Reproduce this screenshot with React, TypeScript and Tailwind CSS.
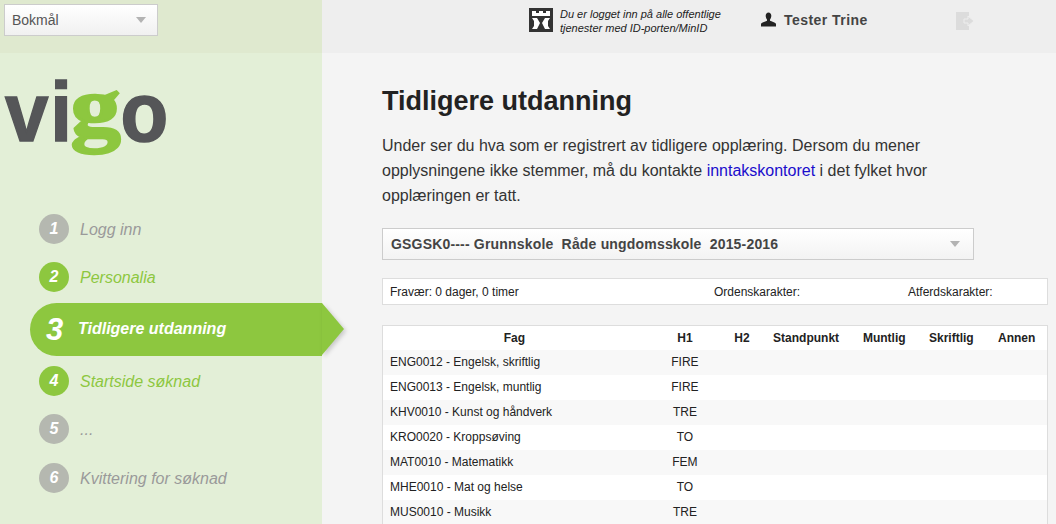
const sans = "font-['Liberation_Sans',Arial,sans-serif]";

const steps = [
  { n: "1", label: "Logg inn", kind: "gray" },
  { n: "2", label: "Personalia", kind: "green" },
  { n: "3", label: "Tidligere utdanning", kind: "active" },
  { n: "4", label: "Startside søknad", kind: "green" },
  { n: "5", label: "...", kind: "gray" },
  { n: "6", label: "Kvittering for søknad", kind: "last" },
];

const rows = [
  ["ENG0012 - Engelsk, skriftlig", "FIRE"],
  ["ENG0013 - Engelsk, muntlig", "FIRE"],
  ["KHV0010 - Kunst og håndverk", "TRE"],
  ["KRO0020 - Kroppsøving", "TO"],
  ["MAT0010 - Matematikk", "FEM"],
  ["MHE0010 - Mat og helse", "TO"],
  ["MUS0010 - Musikk", "TRE"],
];

function Caret() {
  return <span className="h-0 w-0 border-x-[5px] border-t-[6px] border-x-transparent border-t-[#b3b3b3]" />;
}

function Step({ n, label, kind }: { n: string; label: string; kind: string }) {
  if (kind === "active") {
    return (
      <div className="relative mt-[2px] mb-[1px] ml-[30px] flex h-[53px] w-[292px] items-center rounded-l-[27px] bg-[#8dc73f] pl-[16px]">
        <span className="w-[32px] text-[31px] leading-none font-bold text-white italic">{n}</span>
        <span className="pb-[2px] text-[16px] font-bold text-white italic">{label}</span>
        <span className="absolute top-0 left-[292px] h-0 w-0 border-y-[26.5px] border-l-[22px] border-y-transparent border-l-[#8dc73f] drop-shadow-[2px_2px_2px_rgba(0,0,0,0.18)]" />
      </div>
    );
  }
  const green = kind === "green";
  return (
    <div className={`ml-[39px] flex h-[48px] items-center ${kind === "last" ? "mt-[1px]" : ""}`}>
      <span className={`flex h-[30px] w-[30px] items-center justify-center rounded-full text-[16px] font-bold text-white italic ${green ? "bg-[#8dc73f]" : "bg-[#b5b8b0]"}`}>{n}</span>
      <span className={`ml-[11px] pt-[2px] text-[16px] italic ${green ? "text-[#8dc73f]" : "text-[#9a9a9a]"}`}>{label}</span>
    </div>
  );
}

export default function App() {
  return (
    <div className={`flex h-[524px] w-[1056px] overflow-hidden bg-[#f4f4f4] text-[#222] ${sans}`}>
      <aside className="flex w-[322px] shrink-0 flex-col bg-[#e3efd7]">
        <div className="h-[53px] bg-[#dfe9cf] pt-[4px] pl-[4px]">
          <div className="flex h-[32px] w-[154px] items-center justify-between border border-[#ccc] bg-gradient-to-b from-white to-[#f0f0f0] pr-[11px] pl-[7px] text-[14px] text-[#555]">
            Bokmål
            <Caret />
          </div>
        </div>
        <div className="h-[152px] pl-[5px]">
          <div className="mt-[13px] flex h-[90px] origin-left scale-x-[0.93] items-baseline text-[84px] leading-[90px] font-bold text-[#555658] [-webkit-text-stroke:1.5px_#555658]">
            <span className="tracking-[2px]">vi</span>
            <span className="ml-[1px] inline-block -translate-y-[4px] scale-x-[1.2] scale-y-[0.95] font-['Liberation_Serif',serif] text-[90px] text-[#8dc73f] [-webkit-text-stroke:2.5px_#8dc73f]">g</span>
            <span className="ml-[4px]">o</span>
          </div>
        </div>
        {steps.map((s) => (
          <Step key={s.n} {...s} />
        ))}
      </aside>
      <main className="min-w-0 flex-1">
        <header className="flex h-[53px] items-start bg-[#eeeeee]">
          <svg className="mt-[8px] ml-[207px]" width="24" height="24" viewBox="0 0 24 24">
            <rect width="24" height="24" fill="#333" />
            <path d="M3 3h4v2h3V3h4v2h3V3h4v5H3z" fill="#fff" />
            <path d="M3 10h5l3 5-3 6H3l2-3v-5z" fill="#fff" />
            <path d="M21 10h-5l-3 5 3 6h5l-2-3v-5z" fill="#fff" />
          </svg>
          <p className="mt-[7px] ml-[7px] w-[190px] text-[11px] leading-[14px] text-[#222] italic">
            Du er logget inn på alle offentlige tjenester med ID-porten/MinID
          </p>
          <svg className="mt-[12px] ml-[11px]" width="15" height="15" viewBox="0 0 16 15">
            <path d="M5 3.500C5 1.500 6.300 0 8 0s3 1.500 3 3.500c0 1.600-.6 3-1.400 3.900v1.400c1.600.9 5.400 1.600 6.400 3.200V15H0v-3c1-1.600 4.800-2.300 6.400-3.200V7.400C5.600 6.500 5 5.100 5 3.500z" fill="#222" />
          </svg>
          <span className="mt-[12px] ml-[8px] w-[83px] text-[14px] leading-[16px] font-bold tracking-[0.45px] whitespace-nowrap text-[#444]">Tester Trine</span>
          <svg className="mt-[12px] ml-[89px]" width="19" height="18" viewBox="0 0 19 18">
            <rect width="13" height="18" fill="#dcdcdc" />
            <path d="M8 7h4V4l6 5-6 5v-3H8z" fill="#dcdcdc" stroke="#eeeeee" strokeWidth="1" />
          </svg>
        </header>
        <div className="pr-[8px] pl-[60px]">
          <h1 className="mt-[32px] text-[27px] leading-[32px] font-bold text-[#222]">Tidligere utdanning</h1>
          <p className="mt-[16px] w-[570px] text-[16px] leading-[25px] text-[#333]">
            Under ser du hva som er registrert av tidligere opplæring. Dersom du mener opplysningene ikke stemmer, må du kontakte <span className="text-[#1a0dcc]">inntakskontoret</span> i det fylket hvor opplæringen er tatt.
          </p>
          <div className="mt-[20px] flex h-[32px] w-[592px] items-center justify-between border border-[#ccc] bg-gradient-to-b from-white to-[#f3f3f3] pr-[13px] pl-[8px] text-[14px] font-bold tracking-[0.18px] whitespace-pre text-[#444]">
            GSGSK0---- Grunnskole  Råde ungdomsskole  2015-2016
            <Caret />
          </div>
          <div className="mt-[18px] flex h-[27px] items-center border border-[#ddd] bg-white pl-[7px] text-[12px] text-[#222]">
            <span className="w-[324px]">Fravær: 0 dager, 0 timer</span>
            <span className="w-[194px]">Ordenskarakter:</span>
            <span>Atferdskarakter:</span>
          </div>
          <table className="mt-[20px] w-[666px] table-fixed border border-[#ddd] bg-white text-[12px] text-[#222]">
            <colgroup>
              <col className="w-[263px]" />
              <col className="w-[78px]" />
              <col className="w-[36px]" />
              <col className="w-[92px]" />
              <col className="w-[64px]" />
              <col className="w-[70px]" />
              <col className="w-[61px]" />
            </colgroup>
            <thead>
              <tr className="h-[24px]">
                {["Fag", "H1", "H2", "Standpunkt", "Muntlig", "Skriftlig", "Annen"].map((h) => (
                  <th key={h} className="text-center font-bold">{h}</th>
                ))}
              </tr>
            </thead>
            <tbody>
              {rows.map(([fag, h1], i) => (
                <tr key={fag} className={`h-[25px] ${i % 2 === 0 ? "bg-[#f8f8f8]" : "bg-white"}`}>
                  <td className="pl-[7px]">{fag}</td>
                  <td className="text-center">{h1}</td>
                  <td colSpan={5} />
                </tr>
              ))}
            </tbody>
          </table>
        </div>
      </main>
    </div>
  );
}
